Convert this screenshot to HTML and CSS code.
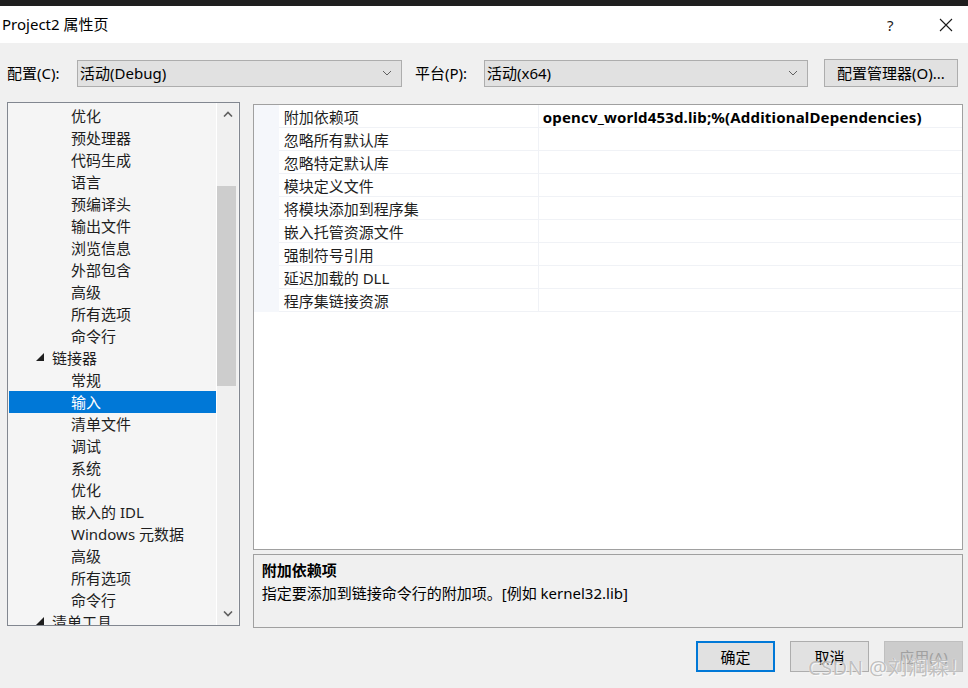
FILE: index.html
```html
<!DOCTYPE html>
<html lang="zh-CN">
<head>
<meta charset="utf-8">
<title>Project2 属性页</title>
<link rel="stylesheet" href="styles.css">
</head>
<body>
<div class="topbar"></div>
<div class="titlebar">
  <span class="title">Project2 属性页</span>
  <span class="help">?</span>
  <span class="close"><svg width="14" height="14" viewBox="0 0 14 14"><path d="M1 1L13 13M13 1L1 13" stroke="#1a1a1a" stroke-width="1.1" fill="none"/></svg></span>
</div>
<div class="dialog">
  <div class="config-row">
    <span class="lbl lbl-config">配置(C):</span>
    <div class="combo combo-config"><span>活动(Debug)</span><svg class="chev" width="10" height="6" viewBox="0 0 10 6"><path d="M1 1L5 5L9 1" stroke="#606060" stroke-width="1" fill="none"/></svg></div>
    <span class="lbl lbl-platform">平台(P):</span>
    <div class="combo combo-platform"><span>活动(x64)</span><svg class="chev" width="10" height="6" viewBox="0 0 10 6"><path d="M1 1L5 5L9 1" stroke="#606060" stroke-width="1" fill="none"/></svg></div>
    <button class="btn btn-mgr">配置管理器(O)...</button>
  </div>
  <div class="main">
    <div class="tree">
      <div class="tree-list">
        <div class="ti child">优化</div>
        <div class="ti child">预处理器</div>
        <div class="ti child">代码生成</div>
        <div class="ti child">语言</div>
        <div class="ti child">预编译头</div>
        <div class="ti child">输出文件</div>
        <div class="ti child">浏览信息</div>
        <div class="ti child">外部包含</div>
        <div class="ti child">高级</div>
        <div class="ti child">所有选项</div>
        <div class="ti child">命令行</div>
        <div class="ti parent"><svg class="tri" width="8" height="8" viewBox="0 0 8 8"><polygon points="0,8 8,8 8,0" fill="#1e1e1e"/></svg>链接器</div>
        <div class="ti child">常规</div>
        <div class="ti child selected">输入</div>
        <div class="ti child">清单文件</div>
        <div class="ti child">调试</div>
        <div class="ti child">系统</div>
        <div class="ti child">优化</div>
        <div class="ti child">嵌入的 IDL</div>
        <div class="ti child">Windows 元数据</div>
        <div class="ti child">高级</div>
        <div class="ti child">所有选项</div>
        <div class="ti child">命令行</div>
        <div class="ti parent"><svg class="tri" width="8" height="8" viewBox="0 0 8 8"><polygon points="0,8 8,8 8,0" fill="#1e1e1e"/></svg>清单工具</div>
      </div>
      <div class="scrollbar">
        <div class="sb-arrow"><svg width="10" height="6" viewBox="0 0 10 6"><path d="M1 5.5L5 1.5L9 5.5" stroke="#606060" stroke-width="1.6" fill="none"/></svg></div>
        <div class="sb-track"><div class="sb-thumb"></div></div>
        <div class="sb-arrow"><svg width="10" height="6" viewBox="0 0 10 6"><path d="M1 0.5L5 4.5L9 0.5" stroke="#606060" stroke-width="1.6" fill="none"/></svg></div>
      </div>
    </div>
    <div class="right">
      <div class="grid">
        <div class="row"><div class="margin"></div><div class="name">附加依赖项</div><div class="value bold">opencv_world453d.lib;%(AdditionalDependencies)</div></div>
        <div class="row"><div class="margin"></div><div class="name">忽略所有默认库</div><div class="value"></div></div>
        <div class="row"><div class="margin"></div><div class="name">忽略特定默认库</div><div class="value"></div></div>
        <div class="row"><div class="margin"></div><div class="name">模块定义文件</div><div class="value"></div></div>
        <div class="row"><div class="margin"></div><div class="name">将模块添加到程序集</div><div class="value"></div></div>
        <div class="row"><div class="margin"></div><div class="name">嵌入托管资源文件</div><div class="value"></div></div>
        <div class="row"><div class="margin"></div><div class="name">强制符号引用</div><div class="value"></div></div>
        <div class="row"><div class="margin"></div><div class="name">延迟加载的 DLL</div><div class="value"></div></div>
        <div class="row"><div class="margin"></div><div class="name">程序集链接资源</div><div class="value"></div></div>
      </div>
      <div class="desc">
        <div class="desc-title">附加依赖项</div>
        <div class="desc-text">指定要添加到链接命令行的附加项。[例如 kernel32.lib]</div>
      </div>
    </div>
  </div>
  <div class="buttons">
    <button class="btn btn-dlg btn-ok">确定</button>
    <button class="btn btn-dlg">取消</button>
    <button class="btn btn-dlg btn-disabled">应用(A)</button>
  </div>
</div>
<div class="watermark">CSDN @刘润森！</div>
</body>
</html>
```
FILE: styles.css
```css
* { box-sizing: border-box; }
html, body { margin: 0; padding: 0; }
body {
  width: 968px;
  height: 688px;
  overflow: hidden;
  background: #f0f0f0;
  font-family: "Noto Sans", "Noto Sans CJK SC", sans-serif;
  font-size: 15px;
  color: #000;
  position: relative;
}
.topbar { height: 6px; background: #1f1f1f; }
.titlebar {
  height: 37px;
  background: #fff;
  display: flex;
  align-items: center;
  padding-left: 2px;
}
.title { flex: 1; font-size: 15px; line-height: 20px; margin-top: -1px; }
.help { width: 20px; margin-right: 32px; font-size: 15px; color: #1a1a1a; line-height: 20px; }
.close { width: 14px; height: 14px; margin-right: 15px; display: flex; }

.dialog { padding: 16px 5px 0 7px; }

.config-row { display: flex; align-items: center; height: 28px; }
.lbl { line-height: 20px; white-space: nowrap; }
.lbl-config { width: 70px; }
.lbl-platform { width: 69px; margin-left: 13px; }
.combo {
  height: 27px;
  border: 1px solid #adadad;
  background: #e1e1e1;
  display: flex;
  align-items: center;
  justify-content: space-between;
  padding: 0 9px 0 2px;
  line-height: 20px;
}
.combo-config { width: 325px; }
.combo-platform { width: 324px; }
.btn {
  font-family: inherit;
  font-size: 15px;
  color: #000;
  background: #e1e1e1;
  border: 1px solid #adadad;
  padding: 0;
  line-height: 20px;
}
.btn-mgr { width: 134px; height: 28px; margin-left: 16px; }

.main { display: flex; margin-top: 15px; height: 526px; }
.tree {
  width: 233px;
  height: 524px;
  border: 1px solid #828790;
  background: #f5f5f5;
  display: flex;
  overflow: hidden;
}
.tree-list {
  width: 209px;
  padding: 2px 0 0 1px;
  border-right: 1px solid #ffffff;
  overflow: hidden;
  height: 100%;
}
.ti {
  height: 22px;
  line-height: 22px;
  white-space: nowrap;
  color: #1e1e1e;
  display: flex;
  align-items: center;
}
.child { padding-left: 62px; }
.parent { padding-left: 27px; }
.tri { margin-right: 8px; margin-top: -2px; }
.selected { background: #0078d7; color: #fff; }

.scrollbar {
  width: 21px;
  background: #f0f0f0;
  display: flex;
  flex-direction: column;
}
.sb-arrow { height: 22px; display: flex; align-items: center; justify-content: center; }
.sb-track { flex: 1; padding-top: 61px; }
.sb-thumb { width: 19px; height: 200px; background: #cdcdcd; }

.right { margin-left: 13px; width: 711px; display: flex; flex-direction: column; }
.grid {
  margin-top: 2px;
  height: 446px;
  border: 1px solid #a0a0a0;
  background: #fff;
}
.row { display: flex; height: 23px; }
.margin { width: 25px; background: #f5f7fb; }
.name {
  width: 260px;
  padding: 2px 0 0 5px;
  border-bottom: 1px solid #f0f2f6;
  border-right: 1px solid #f0f2f6;
  line-height: 20px;
  white-space: nowrap;
  color: #1e1e1e;
}
.value {
  flex: 1;
  padding: 2px 0 0 4px;
  border-bottom: 1px solid #f0f2f6;
  line-height: 20px;
  white-space: nowrap;
}
.bold { font-weight: bold; letter-spacing: 0.17px; }

.desc {
  margin-top: 4px;
  height: 74px;
  border: 1px solid #a0a0a0;
  background: #f0f0f0;
  padding: 4px 0 0 8px;
}
.desc-title { font-weight: bold; line-height: 22px; }
.desc-text { line-height: 22px; margin-top: 1px; }

.buttons {
  display: flex;
  justify-content: flex-end;
  gap: 15px;
  margin-top: 13px;
}
.btn-dlg { width: 79px; height: 31px; }
.btn-ok { border: 2px solid #0078d7; }
.btn-disabled { background: #cccccc; border-color: #bfbfbf; color: #a0a0a0; }

.watermark {
  position: absolute;
  left: 808px;
  top: 655px;
  font-size: 20px;
  line-height: 26px;
  color: rgba(140, 140, 140, 0.55);
  text-shadow: 0 0 1px #fff, 1px 1px 0 rgba(255,255,255,0.7);
  letter-spacing: 0.5px;
  white-space: nowrap;
}
```
